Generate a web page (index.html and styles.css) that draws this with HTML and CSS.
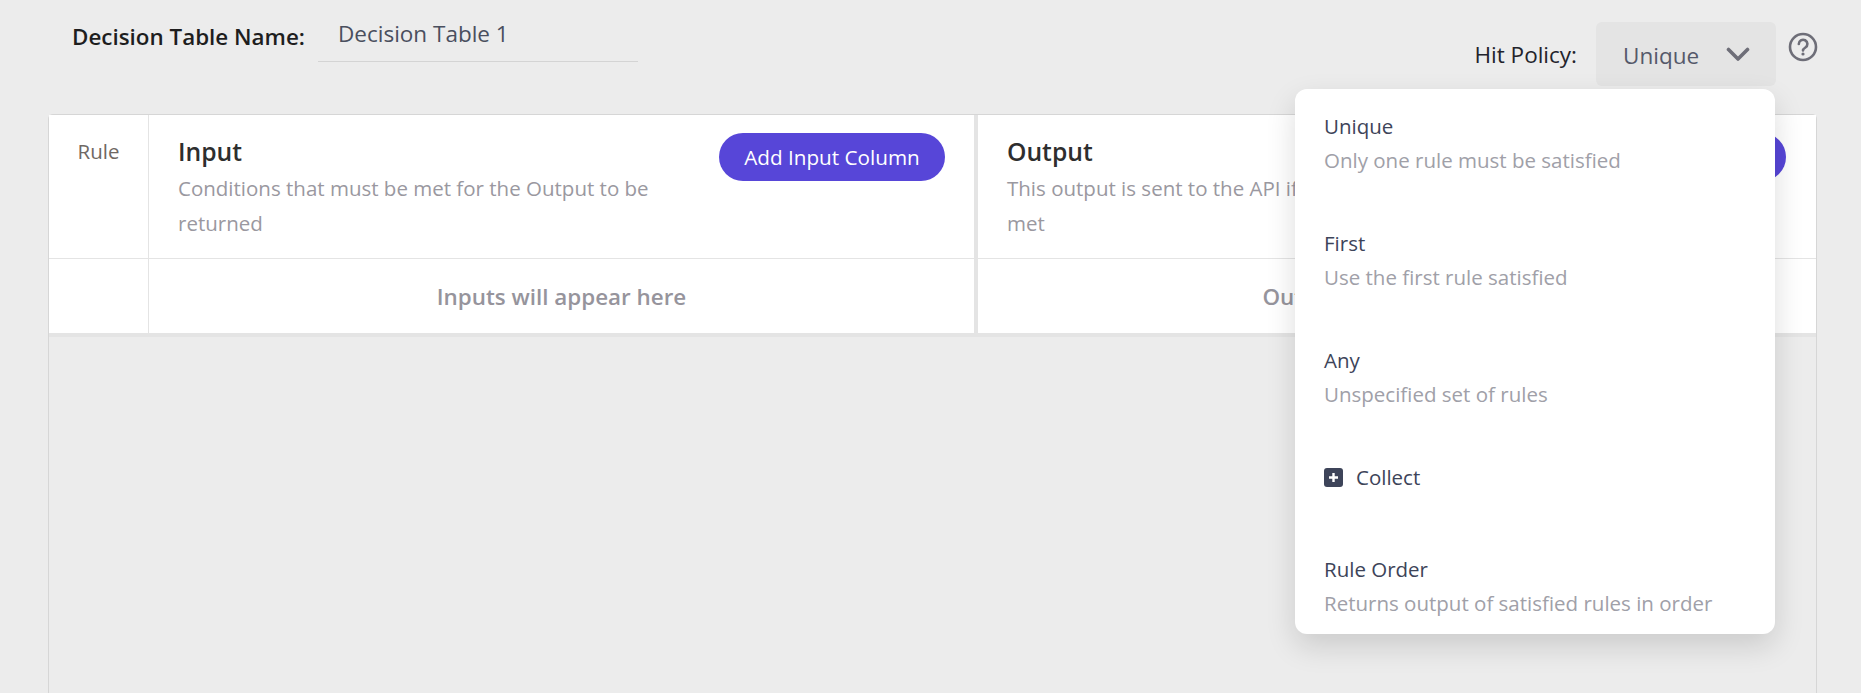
FILE: index.html
```html
<!DOCTYPE html>
<html>
	<head>
		<meta charset="utf-8">
		<title>Decision Table</title>
		<link rel="stylesheet" href="styles.css">
	</head>
	<body>
		<div class="page">
			<div class="topbar">
				<div class="name-group">
					<span class="name-label">Decision Table Name:</span>
					<div class="name-input">Decision Table 1</div>
				</div>
				<div class="policy-group">
					<span class="policy-label">Hit Policy:</span>
					<div class="policy-select">
						<span class="policy-value">Unique</span>
						<svg class="chevron" width="24" height="15" viewBox="0 0 24 15">
							<polyline points="2.5,2.5 12,12 21.5,2.5"></polyline>
						</svg>
						<div class="policy-menu">
							<div class="policy-item">
								<div class="policy-name">Unique</div>
								<div class="policy-desc">Only one rule must be satisfied</div>
							</div>
							<div class="policy-item">
								<div class="policy-name">First</div>
								<div class="policy-desc">Use the first rule satisfied</div>
							</div>
							<div class="policy-item">
								<div class="policy-name">Any</div>
								<div class="policy-desc">Unspecified set of rules</div>
							</div>
							<div class="policy-item policy-item-collect">
								<div class="policy-name">
									<svg class="plus-icon" width="19" height="19" viewBox="0 0 19 19">
										<rect width="19" height="19" rx="3"></rect>
										<path d="M9.5 5v9M5 9.5h9"></path>
									</svg>
									Collect
								</div>
							</div>
							<div class="policy-item">
								<div class="policy-name">Rule Order</div>
								<div class="policy-desc">Returns output of satisfied rules in order</div>
							</div>
						</div>
					</div>
					<svg class="help-icon" width="30" height="30" viewBox="0 0 30 30">
						<circle cx="15" cy="15" r="13"></circle>
						<path d="M10.8 12a4.3 4.2 0 1 1 6.6 3.5c-1.5 1-2.4 1.7-2.4 3"></path>
						<circle class="help-dot" cx="15" cy="22" r="1.6"></circle>
					</svg>
				</div>
			</div>

			<div class="table-card">
				<div class="table-grid">
					<div class="cell head rule-cell">Rule</div>
					<div class="cell head group-cell">
						<div class="group-text">
							<div class="group-title">Input</div>
							<div class="group-desc">Conditions that must be met for the Output to be returned</div>
						</div>
						<button class="add-btn">Add Input Column</button>
					</div>
					<div class="cell head group-cell output-cell">
						<div class="group-text">
							<div class="group-title">Output</div>
							<div class="group-desc">This output is sent to the API if all the conditions are met</div>
						</div>
						<button class="add-btn">Add Output Column</button>
					</div>
					<div class="cell rule-cell"></div>
					<div class="cell empty-cell">Inputs will appear here</div>
					<div class="cell empty-cell output-cell">Outputs will appear here</div>
				</div>
			</div>
		</div>
	</body>
</html>
```

FILE: styles.css
```css
*{
    margin: 0;
    padding: 0;
    box-sizing: border-box;
}
html,body{
    height: 100%;
    overflow: hidden;
}
body{
    background-color: #ececec;
    font-family: "Open Sans", "Liberation Sans", sans-serif;
    font-size: 20.5px;
    color: #3d4459;
}
.page{
    height: 693px;
    padding: 0 44px 0 48px;
    overflow: hidden;
}

/* top bar */
.topbar{
    display: flex;
    justify-content: space-between;
    align-items: flex-start;
    height: 114px;
}
.name-group{
    display: flex;
    align-items: flex-start;
    margin-left: 24px;
}
.name-label{
    margin-top: 21px;
    width: 246px;
    font-size: 22.4px;
    line-height: 32px;
    font-weight: 600;
    color: #1e1e1e;
}
.name-input{
    width: 320px;
    height: 62px;
    padding: 18px 0 0 20px;
    font-size: 22.5px;
    line-height: 32px;
    border-bottom: 1px solid #d4d4d4;
    color: #4a4f5e;
}
.policy-group{
    display: flex;
    align-items: flex-start;
    margin-right: -1px;
}
.policy-label{
    margin-top: 39px;
    margin-right: 19px;
    font-size: 22.5px;
    line-height: 32px;
    color: #23232b;
}
.policy-select{
    position: relative;
    display: flex;
    align-items: center;
    width: 180px;
    height: 64px;
    margin-top: 22px;
    padding: 0 27px;
    background-color: #e4e4e4;
    border-radius: 6px;
}
.policy-value{
    flex: 1;
    margin-top: 2px;
    font-size: 22.5px;
    color: #55596a;
}
.chevron{
    flex: none;
    margin-right: -1px;
}
.chevron polyline{
    fill: none;
    stroke: #6e6e78;
    stroke-width: 3.6;
    stroke-linecap: round;
    stroke-linejoin: round;
}
.help-icon{
    margin: 32px 0 0 12px;
}
.help-icon circle,
.help-icon path{
    fill: none;
    stroke: #6e6e78;
    stroke-width: 2.6;
    stroke-linecap: round;
}
.help-icon .help-dot{
    fill: #6e6e78;
    stroke: none;
}

/* dropdown */
.policy-menu{
    position: absolute;
    top: 67px;
    right: 1px;
    z-index: 10;
    width: 480px;
    height: 545px;
    padding: 20px 29px 0;
    background-color: #fff;
    border-radius: 12px;
    box-shadow: 0 12px 30px rgba(0, 0, 0, 0.14);
}
.policy-item{
    margin-bottom: 49px;
}
.policy-item-collect{
    margin-bottom: 58px;
}
.policy-name{
    display: flex;
    align-items: center;
    height: 34px;
    color: #3d4459;
}
.policy-desc{
    height: 34px;
    line-height: 34px;
    color: #a0a0a8;
}
.plus-icon{
    flex: none;
    margin-right: 13px;
}
.plus-icon rect{
    fill: #3d4459;
}
.plus-icon path{
    fill: none;
    stroke: #fff;
    stroke-width: 2.4;
}

/* table */
.table-card{
    height: 620px;
    background-color: #ececec;
    border: 1px solid #d6d6d6;
    border-bottom: 0;
    border-radius: 5px 5px 0 0;
}
.table-grid{
    display: grid;
    grid-template-columns: 100px 825px 1fr;
    grid-template-rows: 144px 74px;
    background-color: #fff;
    border-bottom: 4px solid #e4e4e4;
    border-radius: 5px 5px 0 0;
}
.cell{
    background-color: #fff;
}
.head{
    border-bottom: 1px solid #e4e4e4;
}
.rule-cell{
    border-right: 1px solid #e4e4e4;
    padding-top: 19px;
    text-align: center;
    line-height: 34px;
    color: #6f6864;
}
.group-cell{
    display: flex;
    justify-content: space-between;
    align-items: flex-start;
    padding: 18px 29px 0 29px;
}
.output-cell{
    border-left: 4px solid #e4e4e4;
}
.group-cell.output-cell{
    padding-left: 29px;
    padding-right: 30px;
}
.group-title{
    margin-top: -1px;
    font-size: 24.7px;
    line-height: 39px;
    font-weight: 600;
    color: #2e2e2e;
}
.group-desc{
    width: 490px;
    line-height: 35px;
    color: #9a98a0;
}
.output-cell .group-desc{
    width: 520px;
}
.add-btn{
    flex: none;
    width: 226px;
    height: 48px;
    border: 0;
    border-radius: 24px;
    background-color: #5746d8;
    color: #fff;
    font-family: inherit;
    font-size: 20.7px;
}
.empty-cell{
    display: flex;
    justify-content: center;
    align-items: center;
    font-size: 22.4px;
    font-weight: 600;
    color: #96949c;
}
```
